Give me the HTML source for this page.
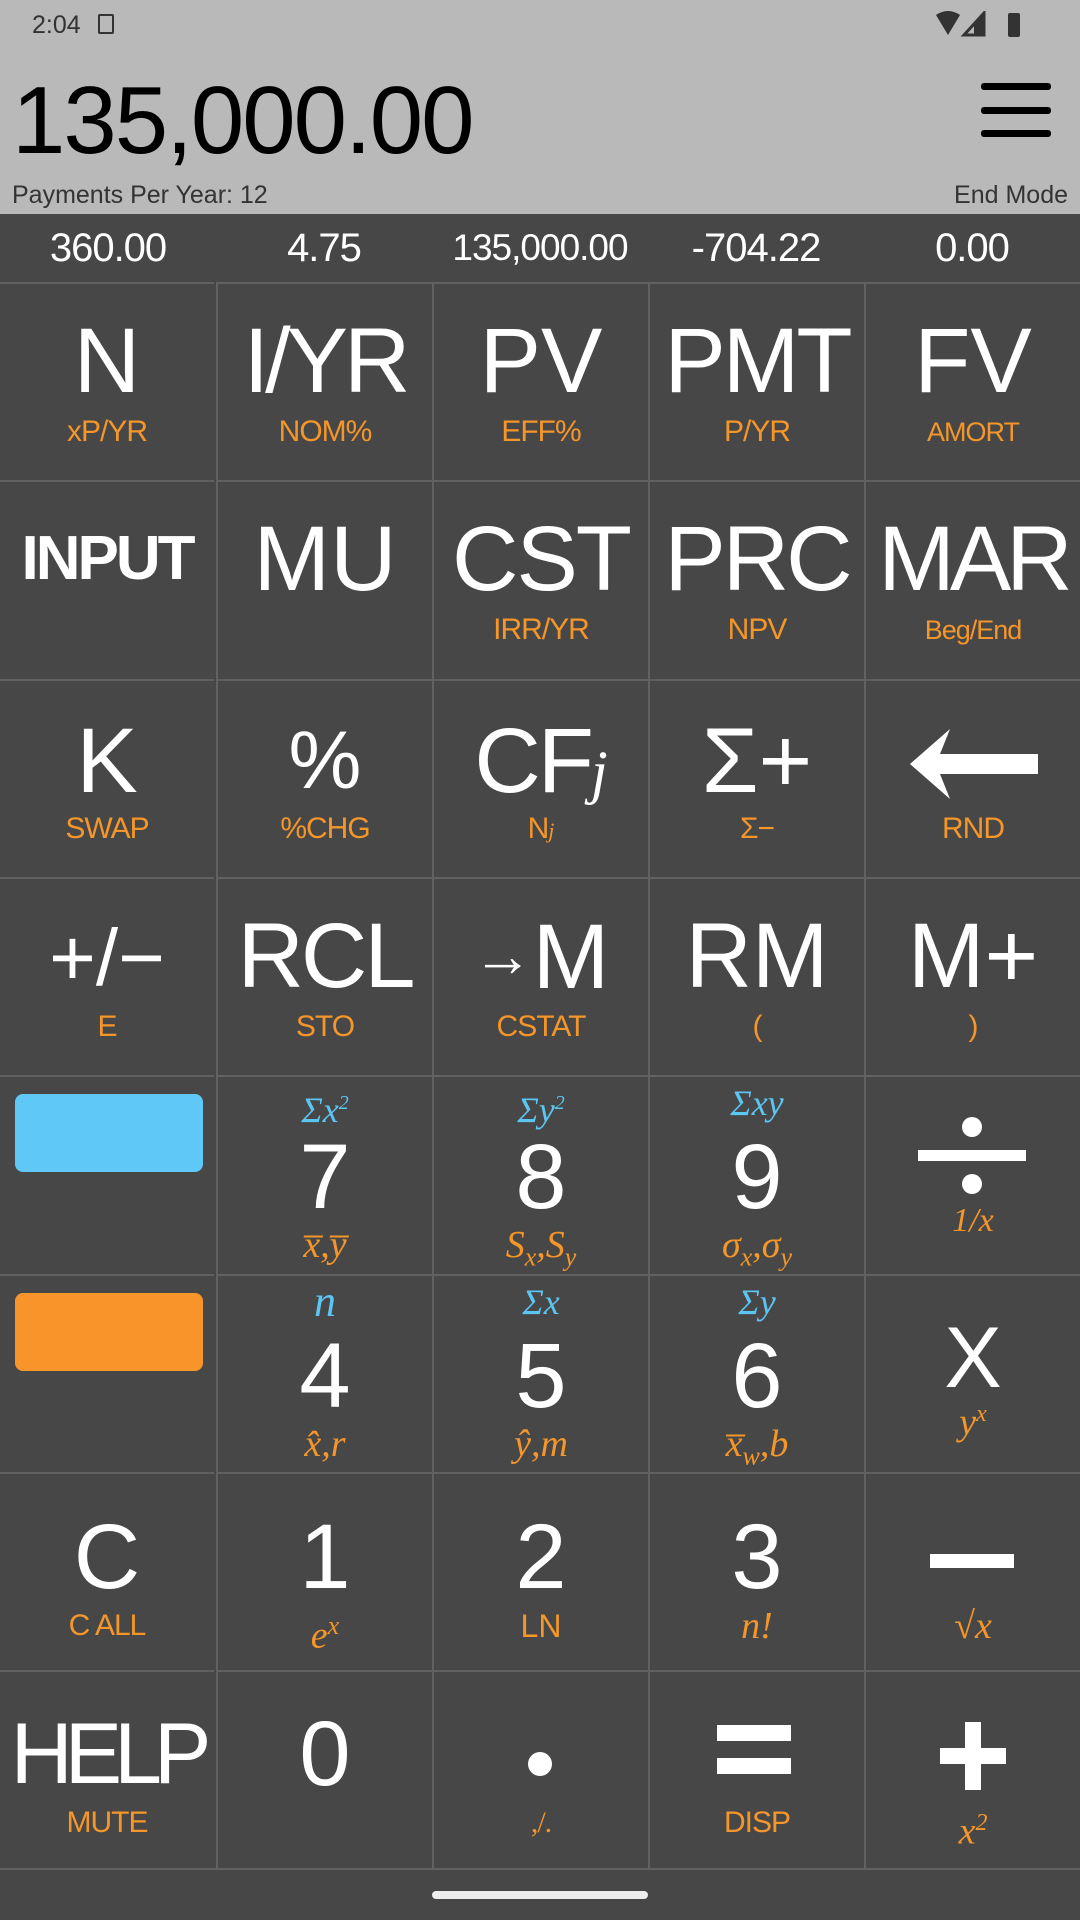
<!DOCTYPE html>
<html><head><meta charset="utf-8"><style>
*{margin:0;padding:0;box-sizing:border-box}
body{width:1080px;height:1920px;overflow:hidden;background:#474747;font-family:"Liberation Sans","DejaVu Sans",sans-serif;position:relative}
#hdr{position:absolute;left:0;top:0;width:1080px;height:214px;background:#b9b9b9;color:#000}
#reg{position:absolute;left:0;top:214px;width:1080px;height:68px;background:#474747}
#reg div{position:absolute;top:0;width:216px;text-align:center;color:#fff;font-size:40px;line-height:68px;letter-spacing:-1px}
.c{position:absolute;width:216px;height:199px;border-left:2px solid #616161;border-top:2px solid #616161;color:#fff;text-align:center}
.m{position:absolute;left:0;width:100%;top:27px;line-height:100px;font-size:92px;white-space:nowrap}
.s{position:absolute;left:0;width:100%;top:128px;line-height:40px;font-size:30px;color:#f4962a;white-space:nowrap;letter-spacing:-1px}
.t{position:absolute;left:0;width:100%;top:4px;line-height:44px;font-size:36px;color:#5cc6f2;font-family:"Liberation Serif",serif;font-style:italic;white-space:nowrap}
.d .m{top:50px}
.d .s{top:148px;font-size:38px;font-family:"Liberation Serif",serif;font-style:italic;letter-spacing:0}
.i{font-family:"Liberation Serif",serif;font-style:italic;letter-spacing:0}
.w{position:absolute;background:#fff}
</style></head><body>
<div id="hdr">
 <div style="position:absolute;left:32px;top:8px;font-size:25px;color:#333;line-height:34px">2:04</div>
 <div style="position:absolute;left:98px;top:14px;width:16px;height:20px;border:2px solid #333;border-radius:2px"></div>
 <svg style="position:absolute;left:936px;top:11px" width="90" height="28" viewBox="0 0 90 28"><path d="M0 4 Q12 -4 24 4 L12 24 Z" fill="#333"/><path d="M48 2 L48 24 L28 24 Z" fill="none" stroke="#333" stroke-width="3"/><path d="M38 14 L48 4 L48 24 L38 24Z" fill="#333"/><rect x="72" y="2" width="12" height="24" rx="2" fill="#333"/></svg>
 <div style="position:absolute;left:12px;top:66px;font-size:96px;line-height:110px;letter-spacing:-2px">135,000.00</div>
 <div style="position:absolute;left:981px;top:83px;width:70px;height:7px;background:#000;border-radius:3px"></div>
 <div style="position:absolute;left:981px;top:107px;width:70px;height:7px;background:#000;border-radius:3px"></div>
 <div style="position:absolute;left:981px;top:130px;width:70px;height:7px;background:#000;border-radius:3px"></div>
 <div style="position:absolute;left:12px;top:180px;font-size:25px;color:#333;line-height:30px">Payments Per Year: 12</div>
 <div style="position:absolute;right:12px;top:180px;font-size:25px;color:#333;line-height:30px">End Mode</div>
</div>
<div id="reg">
 <div style="left:0">360.00</div><div style="left:216px">4.75</div><div style="left:432px;font-size:37px">135,000.00</div><div style="left:648px">-704.22</div><div style="left:864px">0.00</div>
</div>

<div class="c" style="left:-2px;top:282px"><div class="m">N</div><div class="s">xP/YR</div></div>
<div class="c" style="left:216px;top:282px"><div class="m" style="letter-spacing:-4px">I/YR</div><div class="s">NOM%</div></div>
<div class="c" style="left:432px;top:282px"><div class="m">PV</div><div class="s">EFF%</div></div>
<div class="c" style="left:648px;top:282px"><div class="m" style="letter-spacing:-3px">PMT</div><div class="s">P/YR</div></div>
<div class="c" style="left:864px;top:282px"><div class="m">FV</div><div class="s" style="font-size:27px">AMORT</div></div>

<div class="c" style="left:-2px;top:480px"><div class="m" style="font-size:62px;font-weight:bold;letter-spacing:-3px">INPUT</div></div>
<div class="c" style="left:216px;top:480px"><div class="m">MU</div></div>
<div class="c" style="left:432px;top:480px"><div class="m" style="letter-spacing:-2px">CST</div><div class="s">IRR/YR</div></div>
<div class="c" style="left:648px;top:480px"><div class="m" style="letter-spacing:-3px">PRC</div><div class="s">NPV</div></div>
<div class="c" style="left:864px;top:480px"><div class="m" style="letter-spacing:-5px">MAR</div><div class="s" style="font-size:27px">Beg/End</div></div>

<div class="c" style="left:-2px;top:679px"><div class="m" style="top:30px">K</div><div class="s">SWAP</div></div>
<div class="c" style="left:216px;top:679px"><div class="m" style="top:30px;font-size:82px">%</div><div class="s">%CHG</div></div>
<div class="c" style="left:432px;top:679px"><div class="m" style="top:30px;letter-spacing:-3px">CF<span class="i" style="font-size:60px">j</span></div><div class="s">N<span class="i" style="font-size:22px">j</span></div></div>
<div class="c" style="left:648px;top:679px"><div class="m" style="top:30px">Σ+</div><div class="s">Σ−</div></div>
<div class="c" style="left:864px;top:679px"><svg style="position:absolute;left:44px;top:48px" width="128" height="70" viewBox="0 0 128 70"><path d="M0 35 L40 0 L30 25 L128 25 L128 45 L30 45 L40 70 Z" fill="#fff"/></svg><div class="s">RND</div></div>

<div class="c" style="left:-2px;top:877px"><div class="m" style="font-size:80px;top:29px">+/−</div><div class="s">E</div></div>
<div class="c" style="left:216px;top:877px"><div class="m" style="letter-spacing:-3px">RCL</div><div class="s">STO</div></div>
<div class="c" style="left:432px;top:877px"><div class="m"><span style="font-size:60px;vertical-align:12px">→</span>M</div><div class="s">CSTAT</div></div>
<div class="c" style="left:648px;top:877px"><div class="m">RM</div><div class="s">(</div></div>
<div class="c" style="left:864px;top:877px"><div class="m">M+</div><div class="s">)</div></div>

<div class="c" style="left:-2px;top:1075px"><div style="position:absolute;left:15px;top:17px;width:188px;height:78px;background:#5fc8f7;border-radius:8px"></div></div>
<div class="c d" style="left:216px;top:1075px"><div class="t">Σx<sup style="font-size:20px">2</sup></div><div class="m">7</div><div class="s">x̅,y̅</div></div>
<div class="c d" style="left:432px;top:1075px"><div class="t">Σy<sup style="font-size:20px">2</sup></div><div class="m">8</div><div class="s">S<sub style="font-size:26px">x</sub>,S<sub style="font-size:26px">y</sub></div></div>
<div class="c d" style="left:648px;top:1075px"><div class="t">Σxy</div><div class="m">9</div><div class="s">σ<sub style="font-size:26px">x</sub>,σ<sub style="font-size:26px">y</sub></div></div>
<div class="c d" style="left:864px;top:1075px">
 <div class="w" style="left:52px;top:73px;width:108px;height:11px"></div>
 <div class="w" style="left:96px;top:40px;width:20px;height:20px;border-radius:50%"></div>
 <div class="w" style="left:96px;top:97px;width:20px;height:20px;border-radius:50%"></div>
 <div class="s" style="top:124px;font-size:34px">1/x</div></div>

<div class="c" style="left:-2px;top:1274px"><div style="position:absolute;left:15px;top:17px;width:188px;height:78px;background:#f7952a;border-radius:8px"></div></div>
<div class="c d" style="left:216px;top:1274px"><div class="t" style="font-size:44px">n</div><div class="m">4</div><div class="s">x̂,r</div></div>
<div class="c d" style="left:432px;top:1274px"><div class="t">Σx</div><div class="m">5</div><div class="s">ŷ,m</div></div>
<div class="c d" style="left:648px;top:1274px"><div class="t">Σy</div><div class="m">6</div><div class="s">x̅<sub style="font-size:26px">w</sub>,b</div></div>
<div class="c d" style="left:864px;top:1274px"><div class="m" style="top:32px;font-size:86px">X</div><div class="s" style="top:118px">y<sup style="font-size:24px">x</sup></div></div>

<div class="c" style="left:-2px;top:1472px"><div class="m" style="top:33px">C</div><div class="s" style="top:132px">C ALL</div></div>
<div class="c d" style="left:216px;top:1472px"><div class="m" style="top:33px">1</div><div class="s" style="top:132px">e<sup style="font-size:26px">x</sup></div></div>
<div class="c d" style="left:432px;top:1472px"><div class="m" style="top:33px">2</div><div class="s" style="top:132px;font-family:'Liberation Sans',sans-serif;font-style:normal;font-size:32px">LN</div></div>
<div class="c d" style="left:648px;top:1472px"><div class="m" style="top:33px">3</div><div class="s" style="top:132px">n!</div></div>
<div class="c d" style="left:864px;top:1472px"><div class="w" style="left:64px;top:80px;width:84px;height:14px"></div><div class="s" style="top:132px">√x</div></div>

<div class="c" style="left:-2px;top:1670px"><div class="m" style="top:32px;font-size:86px;letter-spacing:-8px">HELP</div><div class="s" style="top:131px">MUTE</div></div>
<div class="c" style="left:216px;top:1670px"><div class="m" style="top:32px">0</div></div>
<div class="c" style="left:432px;top:1670px"><div class="w" style="left:94px;top:80px;width:24px;height:24px;border-radius:50%"></div><div class="s" style="top:131px;font-family:'Liberation Serif',serif">,/.</div></div>
<div class="c" style="left:648px;top:1670px"><div class="w" style="left:67px;top:53px;width:74px;height:16px"></div><div class="w" style="left:67px;top:86px;width:74px;height:16px"></div><div class="s" style="top:131px">DISP</div></div>
<div class="c" style="left:864px;top:1670px"><div class="w" style="left:74px;top:76px;width:66px;height:16px"></div><div class="w" style="left:99px;top:50px;width:16px;height:68px"></div><div class="s" style="top:131px;font-family:'Liberation Serif',serif;font-style:italic;font-size:38px;letter-spacing:0">x<sup style="font-size:24px">2</sup></div></div>

<div style="position:absolute;left:0;top:1868px;width:1080px;height:2px;background:#616161"></div>
<div style="position:absolute;left:432px;top:1891px;width:216px;height:8px;border-radius:4px;background:#eee"></div>
</body></html>
